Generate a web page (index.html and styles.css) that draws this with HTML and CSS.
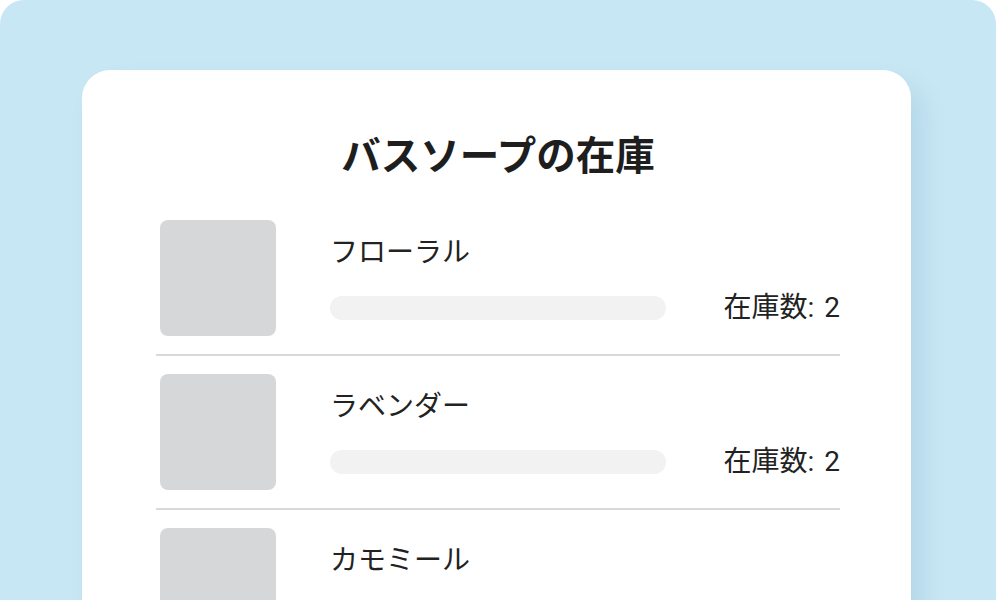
FILE: index.html
```html
<!DOCTYPE html>
<html lang="ja">
<head>
  <meta charset="UTF-8">
  <meta name="viewport" content="width=device-width, initial-scale=1.0">
  <title>バスソープの在庫</title>
  <link rel="stylesheet" href="styles.css">
</head>
<body>
  <div class="panel">
    <div class="card">
      <h1 class="title">バスソープの在庫</h1>
      <div class="list">
        <div class="item">
          <div class="thumb"></div>
          <div class="info">
            <div class="name">フローラル</div>
            <div class="meta">
              <div class="bar"></div>
              <span class="stock">在庫数: 2</span>
            </div>
          </div>
        </div>
        <div class="item">
          <div class="thumb"></div>
          <div class="info">
            <div class="name">ラベンダー</div>
            <div class="meta">
              <div class="bar"></div>
              <span class="stock">在庫数: 2</span>
            </div>
          </div>
        </div>
        <div class="item">
          <div class="thumb"></div>
          <div class="info">
            <div class="name">カモミール</div>
            <div class="meta">
              <div class="bar"></div>
              <span class="stock">在庫数: 2</span>
            </div>
          </div>
        </div>
      </div>
    </div>
  </div>
</body>
</html>
```

FILE: styles.css
```css
html, body { margin: 0; background: #fff; overflow: hidden; }
body { font-family: Roboto, "Noto Sans CJK JP", sans-serif; color: #222; }
.panel { height: 700px; padding: 70px 0 0 82px; background: #c8e7f4; border-radius: 24px; box-sizing: border-box; }
.card { width: 829px; min-height: 640px; padding: 59px 71px 0 74px; box-sizing: border-box; background: #fff; border-radius: 28px; box-shadow: 12px 14px 24px rgba(40, 110, 150, 0.12); }
.title { margin: 0 0 17px; font-size: 39.5px; line-height: 56px; font-weight: 700; text-align: center; color: #1e1e1e; }
.item { display: flex; padding: 18px 0 18px 4px; border-bottom: 2px solid #d9d9d9; }
.thumb { width: 116px; height: 116px; flex-shrink: 0; background: #d6d7d9; border-radius: 8px; }
.info { flex: 1; margin-left: 54px; padding-top: 13px; }
.name { font-size: 28px; line-height: 40px; }
.meta { display: flex; align-items: center; justify-content: space-between; height: 40px; margin-top: 15px; }
.bar { width: 336px; height: 24px; background: #f2f2f2; border-radius: 12px; }
.stock { font-size: 28px; line-height: 40px; word-spacing: 3px; }
.stock-num { margin-left: 2px; }
```
